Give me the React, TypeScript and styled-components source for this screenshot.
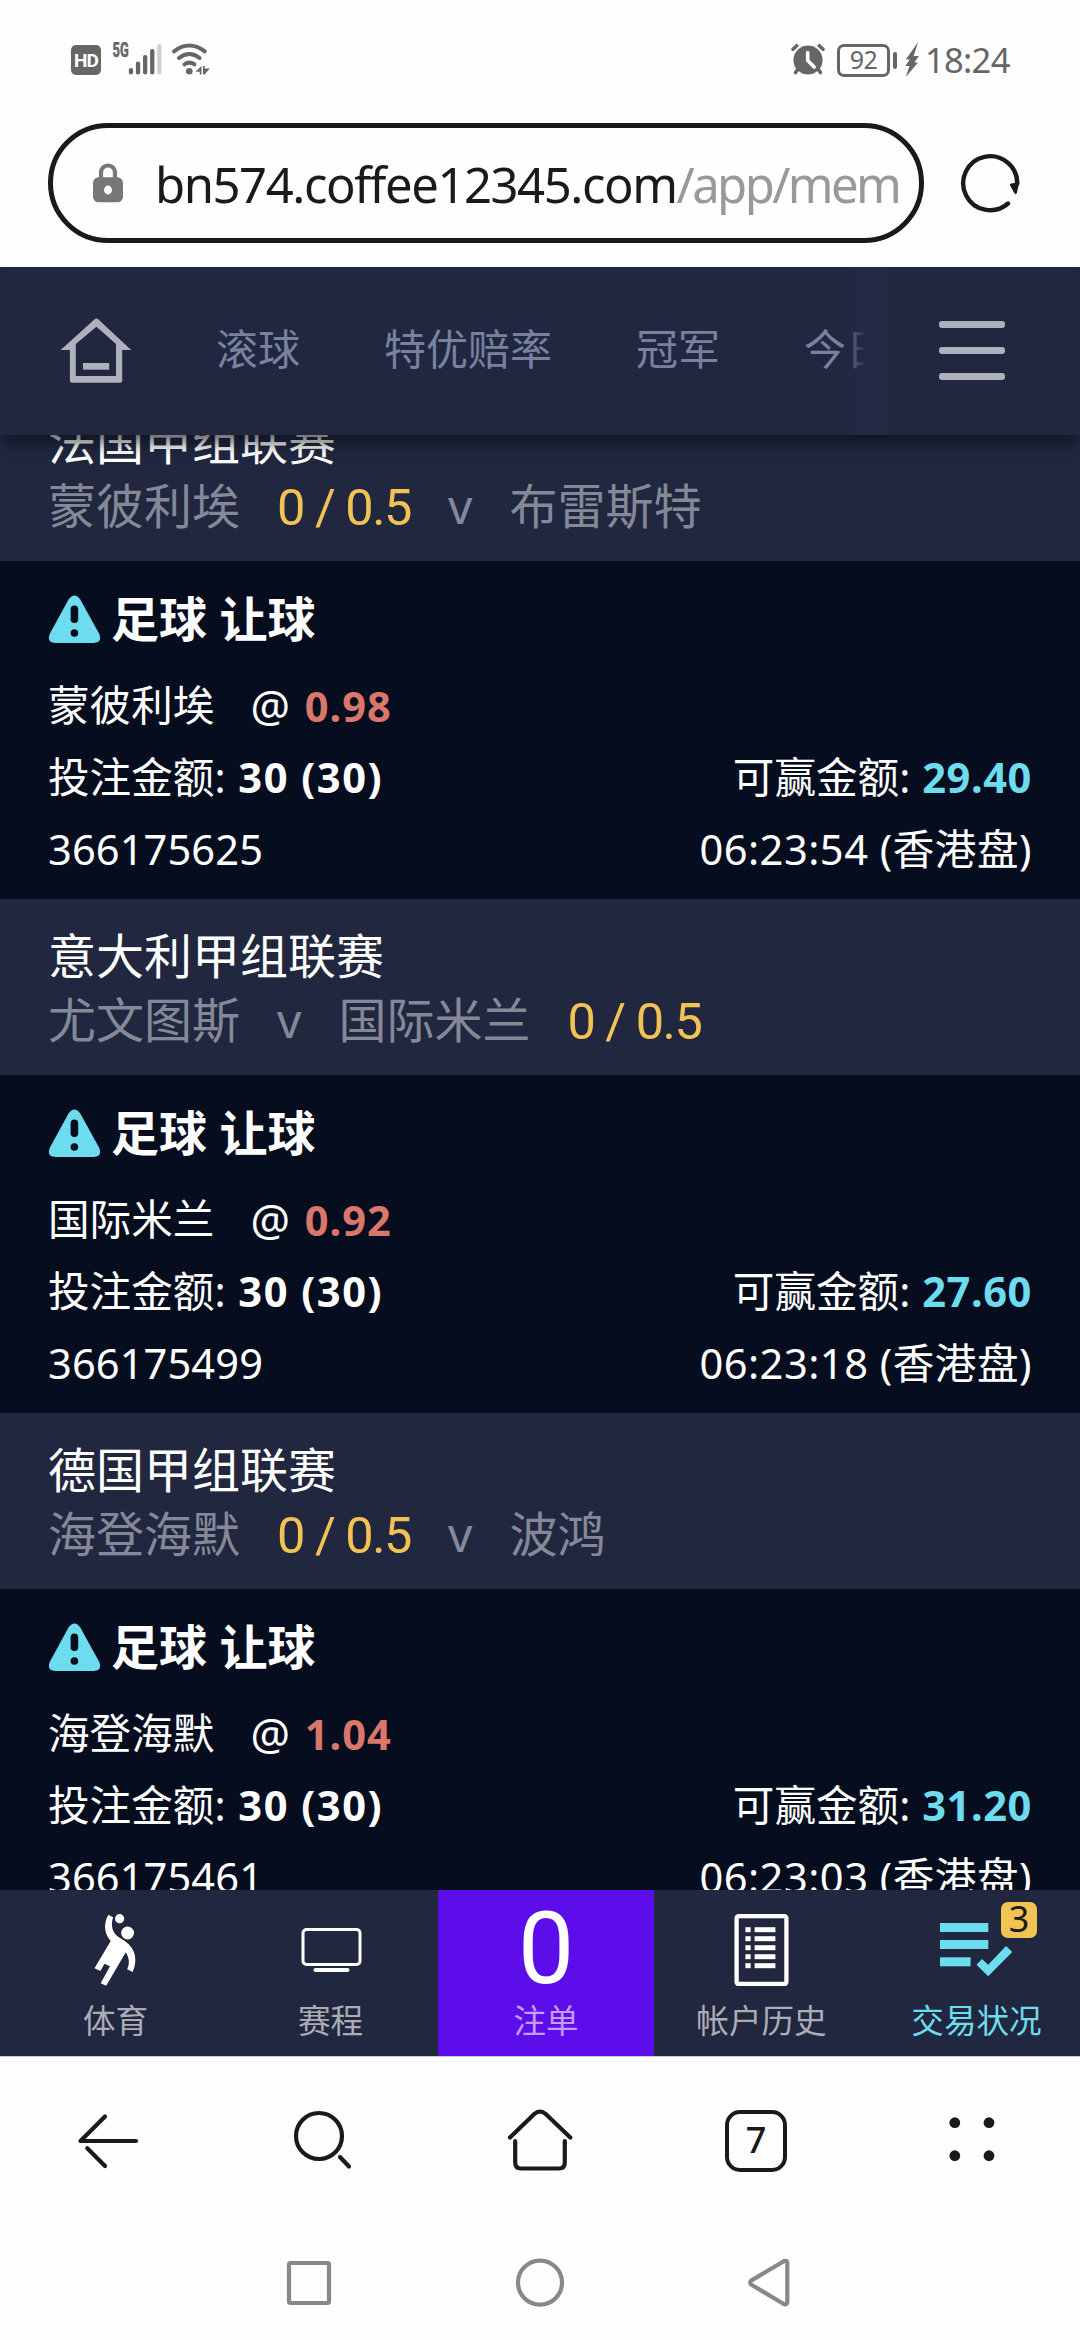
import React from "react";
import styled, { createGlobalStyle } from "styled-components";

const color = {
  panel: "#20273f",
  dark: "#060d1f",
  muted: "#858997",
  nav: "#78829f",
  yellow: "#f2c253",
  red: "#db766a",
  cyan: "#6ddcee",
  purple: "#5d0dea",
  ink: "#1a1a1a",
  status: "#666666",
};

const GlobalStyle = createGlobalStyle`
  * { box-sizing: border-box; }
  body {
    margin: 0;
    background: #fff;
    font-family: "Noto Sans", "Noto Sans CJK SC", sans-serif;
  }
`;

const Screen = styled.div`
  display: flex;
  flex-direction: column;
  width: 1080px;
  height: 2340px;
  overflow: hidden;
  background: #fefefe;
`;

/* ---------- system status bar ---------- */

const StatusBar = styled.header`
  display: flex;
  justify-content: space-between;
  height: 123px;
  padding: 42px 71px 0;
  color: ${color.status};
`;

const StatusGroup = styled.div`
  display: flex;
  align-items: center;
  height: 36px;
`;

const HdBadge = styled.span`
  width: 30px;
  height: 30px;
  margin-right: 11px;
  border-radius: 5px;
  background: ${color.status};
  color: #fff;
  font: 700 19px/31px Roboto, sans-serif;
  letter-spacing: -1px;
  text-align: center;
`;

const Battery = styled.span`
  width: 53px;
  height: 33px;
  margin-left: 12px;
  border: 3px solid ${color.status};
  border-radius: 7px;
  font-size: 25px;
  line-height: 25px;
  letter-spacing: -0.6px;
  text-align: center;
`;

const BatteryTip = styled.span`
  width: 4px;
  height: 17px;
  margin: 0 8px 0 3px;
  border-radius: 2px;
  background: ${color.status};
`;

const Clock = styled.time`
  width: 84px;
  margin-left: 6px;
  font-size: 34.5px;
  line-height: 36px;
  letter-spacing: -0.7px;
  white-space: nowrap;
`;

/* ---------- address bar ---------- */

const AddressRow = styled.div`
  display: flex;
  height: 144px;
  padding-left: 48px;
`;

const AddressPill = styled.div`
  display: flex;
  align-items: center;
  width: 876px;
  height: 120px;
  padding-left: 40px;
  border: 5px solid ${color.ink};
  border-radius: 60px;
`;

const Url = styled.span`
  margin-left: 32px;
  padding-top: 2px;
  color: ${color.ink};
  font-size: 49px;
  line-height: 60px;
  letter-spacing: -1.45px;
  white-space: nowrap;
`;

const UrlPath = styled.span`
  color: #999;
  letter-spacing: -2.6px;
`;

const ReloadButton = styled.div`
  display: flex;
  height: 120px;
  align-items: center;
  margin-left: 34px;
`;

/* ---------- site header ---------- */

const SiteHeader = styled.nav`
  position: relative;
  z-index: 1;
  display: flex;
  align-items: center;
  flex: none;
  height: 168px;
  padding-left: 60px;
  background: ${color.panel};
  box-shadow: 0 13px 14px -5px rgba(9, 12, 18, 0.65);
`;

const HomeIcon = styled.svg`
  flex: none;
  margin-right: 84px;
`;

const NavScroller = styled.div`
  position: relative;
  display: flex;
  align-items: center;
  gap: 84px;
  width: 672px;
  height: 168px;
  overflow: hidden;

  &::after {
    content: "";
    position: absolute;
    top: 0;
    right: 0;
    width: 45px;
    height: 100%;
    background: linear-gradient(to right, rgba(36, 42, 68, 0), #242a44 50%);
  }
`;

const NavLink = styled.span`
  flex: none;
  color: ${color.nav};
  font-size: 42px;
  line-height: 60px;
  margin-top: -4px;
`;

const MenuButton = styled.div`
  display: flex;
  flex-direction: column;
  gap: 19px;
  width: 66px;
  margin: -1px 0 0 51px;
`;

const MenuLine = styled.span`
  height: 7px;
  border-radius: 3px;
  background: #aeb0bb;
`;

/* ---------- bet list ---------- */

const BetList = styled.main`
  display: flex;
  flex-direction: column;
  justify-content: flex-start;
  height: 1455px;
  flex: none;
  overflow: hidden;
  background: ${color.dark};
`;

const Bet = styled.article`
  flex: none;
  height: 514px;

  &:first-child {
    margin-top: -50px;
  }
`;

const Match = styled.header`
  height: 176px;
  padding: 25px 48px 0;
  background: ${color.panel};
  font-size: 48px;
  line-height: 64px;
  white-space: nowrap;
`;

const League = styled.div`
  color: #fff;
`;

const Teams = styled.div`
  display: flex;
  gap: 37px;
  height: 64px;
  color: ${color.muted};
`;

const Handicap = styled.span`
  width: 134px;
  color: ${color.yellow};
  font-family: Roboto, sans-serif;
  font-size: 50.5px;
  line-height: 67px;
  letter-spacing: -1.5px;
`;

const Slip = styled.section`
  height: 338px;
  padding: 26px 48px 0;
  color: #fff;
  font-size: 41.6px;
  line-height: 72px;
  white-space: nowrap;
`;

const SlipTitle = styled.div`
  display: flex;
  align-items: center;
  gap: 10px;
  margin-bottom: 18px;
  font-size: 48px;
  font-weight: 700;
  line-height: 64px;
`;

const SlipRow = styled.div<{ $gap?: number }>`
  display: flex;
  justify-content: ${(p) => (p.$gap ? "flex-start" : "space-between")};
  gap: ${(p) => p.$gap ?? 0}px;
  height: 72px;
`;

const At = styled.span`
  font-size: 44px;
`;

const Stake = styled.b`
  margin-left: 2px;
  letter-spacing: 1.5px;
`;

const Odds = styled.b`
  margin-left: 4px;
  color: ${color.red};
  letter-spacing: 1px;
`;

const Win = styled.b`
  color: ${color.cyan};
  margin-left: 1px;
  letter-spacing: 0.6px;
`;

const TicketId = styled.span`
  letter-spacing: 0.1px;
`;

const Time = styled.span`
  letter-spacing: 0.5px;
`;

/* ---------- site tab bar ---------- */

const TabBar = styled.nav`
  display: flex;
  flex: none;
  height: 167px;
  padding-left: 8px;
  overflow: hidden;
  background: ${color.panel};
  border-bottom: 1px solid #c9c8d8;
`;

const Tab = styled.div<{ $color?: string; $selected?: boolean }>`
  position: relative;
  display: flex;
  flex: none;
  flex-direction: column;
  align-items: center;
  gap: 12px;
  width: ${(p) => (p.$selected ? 216 : 215)}px;
  height: 166px;
  padding-top: 24px;
  background: ${(p) => (p.$selected ? color.purple : "transparent")};
  color: ${(p) => p.$color ?? "#abadb6"};
  font-size: 32.6px;
  line-height: 45px;
`;

const SlipCount = styled.span`
  height: 72px;
  color: #fff;
  font-family: Roboto, sans-serif;
  font-size: 100px;
  line-height: 69px;
`;

const Badge = styled.span`
  position: absolute;
  top: 12px;
  left: 132px;
  width: 36px;
  height: 36px;
  border-radius: 7px;
  background: ${color.yellow};
  color: #1c1a14;
  font-size: 36px;
  line-height: 34px;
  text-align: center;
`;

/* ---------- browser and system bars ---------- */

const BrowserBar = styled.footer`
  display: flex;
  flex: none;
  height: 168px;
`;

const BrowserButton = styled.div`
  display: flex;
  align-items: center;
  justify-content: center;
  width: 216px;
`;

const TabsCount = styled.span`
  width: 62px;
  height: 62px;
  border: 4px solid ${color.ink};
  border-radius: 15px;
  color: ${color.ink};
  font-size: 36px;
  font-weight: 500;
  line-height: 52px;
  text-align: center;
`;

const SystemBar = styled.div`
  display: flex;
  align-items: center;
  justify-content: center;
  gap: 159px;
  height: 115px;
`;

type BetData = {
  league: string;
  teams: { text: string; handicap?: boolean }[];
  pick: string;
  odds: string;
  win: string;
  id: string;
  time: string;
};

const bets: BetData[] = [
  {
    league: "法国甲组联赛",
    teams: [{ text: "蒙彼利埃" }, { text: "0 / 0.5", handicap: true }, { text: "v" }, { text: "布雷斯特" }],
    pick: "蒙彼利埃",
    odds: "0.98",
    win: "29.40",
    id: "366175625",
    time: "06:23:54",
  },
  {
    league: "意大利甲组联赛",
    teams: [{ text: "尤文图斯" }, { text: "v" }, { text: "国际米兰" }, { text: "0 / 0.5", handicap: true }],
    pick: "国际米兰",
    odds: "0.92",
    win: "27.60",
    id: "366175499",
    time: "06:23:18",
  },
  {
    league: "德国甲组联赛",
    teams: [{ text: "海登海默" }, { text: "0 / 0.5", handicap: true }, { text: "v" }, { text: "波鸿" }],
    pick: "海登海默",
    odds: "1.04",
    win: "31.20",
    id: "366175461",
    time: "06:23:03",
  },
];

const SignalIcon = () => (
  <svg width="59" height="36" viewBox="0 0 59 36">
    <text
      x="0.6"
      y="15.4"
      fontSize="20"
      fontWeight="700"
      fontFamily="Roboto, sans-serif"
      fill={color.status}
      stroke={color.status}
      strokeWidth="0.6"
      textLength="16"
      lengthAdjust="spacingAndGlyphs"
    >
      5G
    </text>
    {[26, 19.5, 13, 7, 2].map((top, i) => (
      <rect key={top} x={16.8 + i * 7.1} y={top} width="4.3" height={32.5 - top} rx="2" fill={i === 4 ? "#d0d0d0" : color.status} />
    ))}
  </svg>
);

const WifiIcon = () => (
  <svg width="40" height="36" viewBox="0 0 40 36">
    <g fill="none" stroke={color.status} strokeWidth="4" strokeLinecap="round">
      <path d="M3 9.4Q18.3-2.4 33.7 9.4" />
      <path d="M8 16Q18.3 8 28.6 16" />
      <path d="M13.5 22.3Q18.3 19 23.4 22.3" />
    </g>
    <circle cx="18.3" cy="29.3" r="3.3" fill={color.status} />
    <path d="M30.5 24v8.5h-1.7v-2.8h-4.3zM32 24h1.7v2.5h5L33.7 32.5H32z" fill={color.status} />
  </svg>
);

const AlarmIcon = () => (
  <svg width="34" height="36" viewBox="0 0 34 36">
    <circle cx="17" cy="18" r="14.6" fill={color.status} />
    <g stroke={color.status} strokeWidth="3.6" strokeLinecap="round">
      <path d="M2 7.2L5.7 3.7M32 7.2L28.3 3.7M7 27l-2.4 3.5M27 27l2.4 3.5" />
    </g>
    <path d="M16.7 10.5v8l6.5 6.5" fill="none" stroke="#fff" strokeWidth="3.6" strokeLinecap="round" strokeLinejoin="round" />
  </svg>
);

const BoltIcon = () => (
  <svg width="14" height="36" viewBox="0 0 14 36">
    <path d="M13.2 0L.8 17.5h4L0.3 24h4.2L.8 35 13 20.5H9.4L13.8 14H8.6z" fill={color.status} />
  </svg>
);

const LockIcon = () => (
  <svg width="30" height="40" viewBox="0 0 30 40">
    <path d="M8 16V9.5a7 7 0 0 1 14 0V16" fill="none" stroke="#777" strokeWidth="4.2" />
    <rect y="14.3" width="30" height="25" rx="5.5" fill="#777" />
    <ellipse cx="15" cy="27" rx="4" ry="4.4" fill="#fff" />
  </svg>
);

const ReloadIcon = () => (
  <svg width="64" height="64" viewBox="0 0 64 64">
    <path d="M50 52.5A27 27 0 1 1 59.2 33" fill="none" stroke={color.ink} strokeWidth="4.4" strokeLinecap="round" />
    <path d="M52 34.2q-.6-1.6 1.2-1.8L61.3 31 59 41.5q-1 3-2.8.6z" fill={color.ink} />
  </svg>
);

const WarningIcon = () => (
  <svg width="53" height="49" viewBox="0 0 53 49">
    <path d="M20.5 4.6Q26.5-3.6 32.3 4.6L51.3 39Q54.5 48 45.5 48H7.5Q-1.5 48 1.7 39Z" fill={color.cyan} />
    <rect x="22.6" y="10.6" width="7.6" height="17.4" rx="3.8" fill={color.dark} />
    <circle cx="26.4" cy="38" r="3.8" fill={color.dark} />
  </svg>
);

const SportIcon = () => (
  <svg width="72" height="72" viewBox="0 0 72 72" fill="#fff">
    <circle cx="39.6" cy="4.7" r="4.6" />
    <circle cx="47.6" cy="19" r="6.4" />
    <path d="M28.3.7L33.1 3.3C30.7 10.5 31.5 19.5 40 24C54 31.5 59 43 52.7 58L47.2 55.3C50 49 49 43.5 45.8 38.3L26.2 71.7L20.7 69.3L30 52.3L24.5 49.7L20.4 57L14.5 54.3L30.7 27C24 19 23.3 10.5 28.3.7Z" />
  </svg>
);

const ScheduleIcon = () => (
  <svg width="72" height="72" viewBox="0 0 72 72">
    <rect x="8" y="15.5" width="57" height="35" rx="3.5" fill="none" stroke="#fff" strokeWidth="3" />
    <rect x="18.5" y="54" width="36" height="4" rx="2" fill="#fff" />
  </svg>
);

const HistoryIcon = () => (
  <svg width="72" height="72" viewBox="0 0 72 72">
    <rect x="10.6" y="2.2" width="49.8" height="67.8" rx="2" fill="none" stroke="#fff" strokeWidth="4.3" />
    {[13.2, 22.2, 31.2, 40.2, 49.2].map((y) => (
      <g key={y} fill="#fff">
        <rect x="19.4" y={y} width="5.3" height="5" />
        <rect x="28.6" y={y} width="20.8" height="5" />
      </g>
    ))}
  </svg>
);

const TradesIcon = () => (
  <svg width="73" height="72" viewBox="0 0 73 72" fill={color.cyan}>
    <rect y="9" width="48.3" height="9" />
    <rect y="26" width="48.3" height="9" />
    <rect y="43.3" width="30.6" height="9" />
    <path d="M36.5 50.7L42 45L48.2 50.7L66 32L72.3 38L48.2 62.3Z" />
  </svg>
);

const lineIcon = {
  width: 72,
  height: 72,
  viewBox: "0 0 72 72",
  fill: "none",
  stroke: color.ink,
  strokeWidth: 4.2,
  strokeLinecap: "round" as const,
  strokeLinejoin: "round" as const,
};

const systemIcon = { ...lineIcon, stroke: "#888" };

export default function App() {
  return (
    <Screen>
      <GlobalStyle />
      <StatusBar>
        <StatusGroup>
          <HdBadge>HD</HdBadge>
          <SignalIcon />
          <WifiIcon />
        </StatusGroup>
        <StatusGroup>
          <AlarmIcon />
          <Battery>92</Battery>
          <BatteryTip />
          <BoltIcon />
          <Clock>18:24</Clock>
        </StatusGroup>
      </StatusBar>

      <AddressRow>
        <AddressPill>
          <LockIcon />
          <Url>
            bn574.coffee12345.com<UrlPath>/app/mem</UrlPath>
          </Url>
        </AddressPill>
        <ReloadButton>
          <ReloadIcon />
        </ReloadButton>
      </AddressRow>

      <SiteHeader>
        <HomeIcon width="72" height="72" viewBox="0 0 72 72" fill="#aeb0bb">
          <path fillRule="evenodd" d="M34.6 4.2Q36.4 2.6 38.2 4.2L71.2 35H62.2V65.7Q62.2 67.7 60.2 67.7H11.9Q9.9 67.7 9.9 65.7V35H.6ZM36.4 11.7L15.8 29V61H56V29Z" />
          <rect x="23" y="48" width="26.2" height="6.7" />
        </HomeIcon>
        <NavScroller>
          <NavLink>滚球</NavLink>
          <NavLink>特优赔率</NavLink>
          <NavLink>冠军</NavLink>
          <NavLink>今日</NavLink>
        </NavScroller>
        <MenuButton>
          <MenuLine />
          <MenuLine />
          <MenuLine />
        </MenuButton>
      </SiteHeader>

      <BetList>
        {bets.map((bet) => (
          <Bet key={bet.id}>
            <Match>
              <League>{bet.league}</League>
              <Teams>
                {bet.teams.map((part) =>
                  part.handicap ? <Handicap key={part.text}>{part.text}</Handicap> : <span key={part.text}>{part.text}</span>
                )}
              </Teams>
            </Match>
            <Slip>
              <SlipTitle>
                <WarningIcon />
                足球 让球
              </SlipTitle>
              <SlipRow $gap={36}>
                <span>{bet.pick}</span>
                <span>
                  <At>@</At> <Odds>{bet.odds}</Odds>
                </span>
              </SlipRow>
              <SlipRow>
                <span>
                  投注金额: <Stake>30 (30)</Stake>
                </span>
                <span>
                  可赢金额: <Win>{bet.win}</Win>
                </span>
              </SlipRow>
              <SlipRow>
                <TicketId>{bet.id}</TicketId>
                <Time>{bet.time} (香港盘)</Time>
              </SlipRow>
            </Slip>
          </Bet>
        ))}
      </BetList>

      <TabBar>
        <Tab>
          <SportIcon />
          体育
        </Tab>
        <Tab>
          <ScheduleIcon />
          赛程
        </Tab>
        <Tab $selected $color="#c49cf7">
          <SlipCount>0</SlipCount>
          注单
        </Tab>
        <Tab>
          <HistoryIcon />
          帐户历史
        </Tab>
        <Tab $color={color.cyan}>
          <TradesIcon />
          <Badge>3</Badge>
          交易状况
        </Tab>
      </TabBar>

      <BrowserBar>
        <BrowserButton>
          <svg {...lineIcon}>
            <path d="M33 11.5L8.5 36H64" />
            <path d="M15.3 43.3L33 61" />
          </svg>
        </BrowserButton>
        <BrowserButton>
          <svg {...lineIcon}>
            <circle cx="31" cy="31" r="23" />
            <path d="M52 52l9 9.5" />
          </svg>
        </BrowserButton>
        <BrowserButton>
          <svg {...lineIcon}>
            <path d="M6 32.5L30.8 8.6Q36 4.8 41.2 8.6L66.3 32.5" />
            <path d="M11.2 36V57.5Q11.2 63.5 17.2 63.5H54.8Q60.8 63.5 60.8 57.5V36" />
          </svg>
        </BrowserButton>
        <BrowserButton>
          <TabsCount>7</TabsCount>
        </BrowserButton>
        <BrowserButton>
          <svg {...lineIcon} fill={color.ink} stroke="none">
            <circle cx="18.8" cy="17.7" r="5.4" />
            <circle cx="53" cy="17.7" r="5.4" />
            <circle cx="18.8" cy="50.7" r="5.4" />
            <circle cx="53" cy="50.7" r="5.4" />
          </svg>
        </BrowserButton>
      </BrowserBar>

      <SystemBar>
        <svg {...systemIcon}>
          <rect x="16" y="16" width="40" height="40" rx="1.5" />
        </svg>
        <svg {...systemIcon}>
          <circle cx="36" cy="35.6" r="22" />
        </svg>
        <svg {...systemIcon}>
          <path d="M16.5 33.4Q13.8 35.6 16.5 37.8L49.2 57.2Q52.3 58.2 52.3 55V16.2Q52.3 13 49.2 14Z" />
        </svg>
      </SystemBar>
    </Screen>
  );
}
